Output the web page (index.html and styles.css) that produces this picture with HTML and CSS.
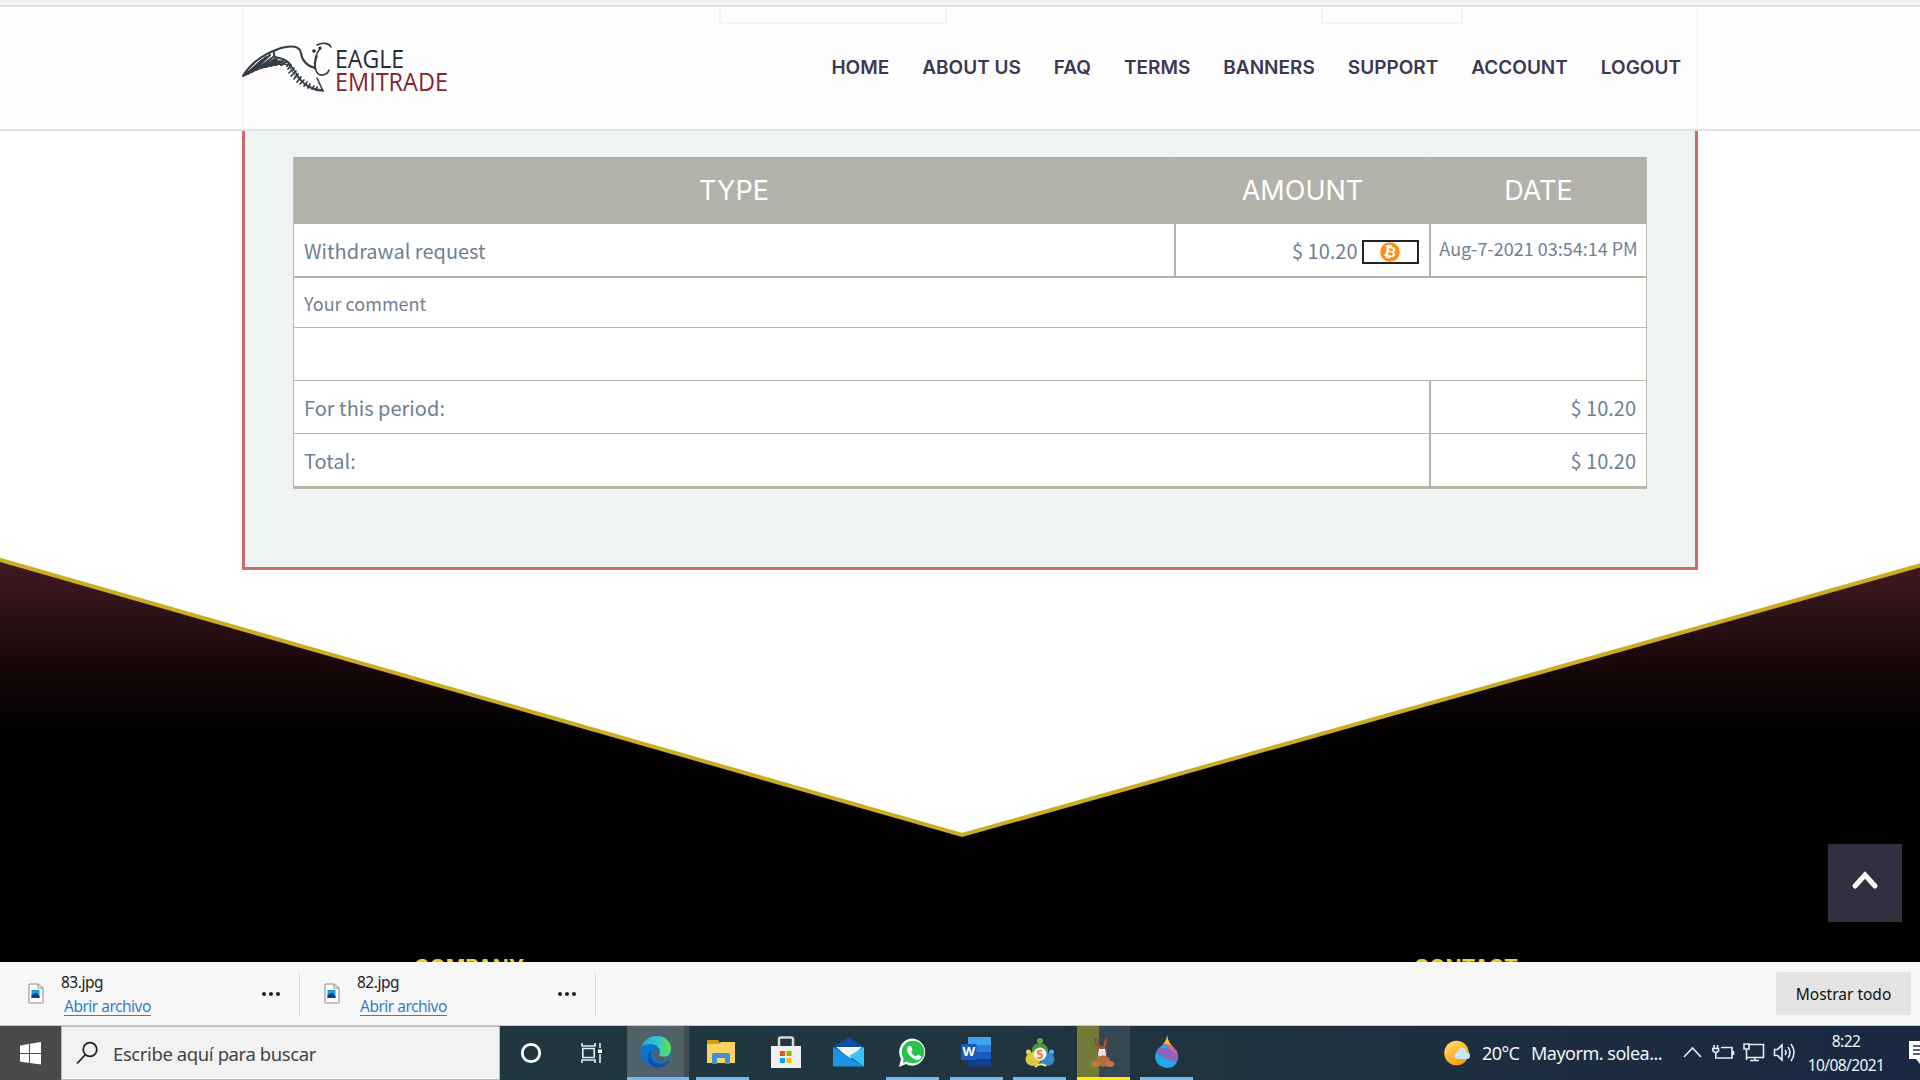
FILE: index.html
```html
<!DOCTYPE html>
<html lang="es">
<head>
<meta charset="utf-8">
<title>Eagle Emitrade</title>
<link rel="stylesheet" href="styles.css">
</head>
<body>
<div class="browser-edge"></div>
<main class="page">
  <header class="site-header">
    <div class="ghosts"><span class="ghost-a"></span><span class="ghost-b"></span></div>
    <svg class="logo" viewBox="242 40 208 54" width="208" height="54">
      <g fill="none" stroke="#343b43" stroke-linecap="round">
        <path d="M243 76C252 61 266 53 281 48C291 45 300 46 301 53C302 61 308 66 315 68" stroke-width="2"/>
        <path d="M315 69C314 60 315 54 320 49M317 45C322 42 329 43 331 47M317 56C313 67 316 76 323 75Q328 74 329 70M317 78L323 91Q308 90 300 79L289 63" stroke-width="1.6"/>
        <path d="M274 52Q273 58 279 58Q288 60 290 65" stroke-width="2"/>
        <path d="M244 76Q262 66 282 64L289 65Q293 76 305 84Q314 90 323 90" stroke-width="1"/>
        <path d="M245 75L262 60M248 74L266 57M252 72L270 55M256 70L273 57M261 68L275 59M266 67L277 60M271 66L280 61M276 65L283 61M281 65L286 62M287 66L289 63" stroke-width="2.1"/>
        <path d="M288 69L291 65M289 73L294 68M291 76L296 71M294 79L298 74M297 82L301 77M300 84L304 80M304 86L307 82M308 88L310 84M312 89L314 86M316 90L317 87" stroke-width="1.7"/>
      </g>
      <circle cx="314" cy="51" r="1.8" fill="#1d242b"/><circle cx="320" cy="48" r="1.6" fill="#1d242b"/>
      <text class="logo-text" x="335" y="67.500" textLength="69" lengthAdjust="spacingAndGlyphs" fill="#262c33">EAGLE</text>
      <text class="logo-text" x="335" y="91" textLength="113" lengthAdjust="spacingAndGlyphs" fill="#832432">EMITRADE</text>
    </svg>
    <nav class="nav"><a>HOME</a><a>ABOUT US</a><a>FAQ</a><a>TERMS</a><a>BANNERS</a><a>SUPPORT</a><a>ACCOUNT</a><a>LOGOUT</a></nav>
  </header>
  <section class="panel">
    <div class="grid">
      <div class="row head"><div class="type">TYPE</div><div class="amount">AMOUNT</div><div class="date">DATE</div></div>
      <div class="row request"><div class="type">Withdrawal request</div><div class="amount">$ 10.20 <svg class="coin" width="57" height="24" viewBox="0 0 57 24"><rect x="1" y="1" width="55" height="22" fill="#fff" stroke="#222" stroke-width="2"/><circle cx="28" cy="12" r="9.800" fill="#fb9113"/><text x="28" y="17" text-anchor="middle" transform="rotate(12 28 12)" class="coin-b">₿</text></svg></div><div class="date small">Aug-7-2021 03:54:14 PM</div></div>
      <div class="row comment"><div>Your comment</div></div>
      <div class="row blank"><div></div></div>
      <div class="row sum"><div class="label">For this period:</div><div class="date">$ 10.20</div></div>
      <div class="row sum last"><div class="label">Total:</div><div class="date">$ 10.20</div></div>
    </div>
  </section>
  <footer class="site-footer">
    <svg class="chevron" width="1920" height="408" viewBox="0 554 1920 408">
      <defs><linearGradient id="wine" gradientUnits="userSpaceOnUse" x1="0" y1="554" x2="0" y2="732"><stop offset="0" stop-color="#421a22"/><stop offset=".25" stop-color="#331419"/><stop offset=".62" stop-color="#180709"/><stop offset="1" stop-color="#020100"/></linearGradient></defs>
      <path d="M0 560L962 836L1920 565V962H0Z" fill="url(#wine)"/>
      <path d="M-5 558.500L962 835L1925 564" fill="none" stroke="#cbad22" stroke-width="4"/>
    </svg>
    <div class="columns"><span>COMPANY</span><span>CONTACT</span></div>
    <button class="to-top"><svg width="30" height="22" viewBox="0 0 30 22"><path d="M5 17L15 6L25 17" fill="none" stroke="#fff" stroke-width="5" stroke-linecap="round"/></svg></button>
  </footer>
</main>
<section class="downloads">
  <div class="download">
    <svg width="16" height="21" viewBox="0 0 16 21"><path d="M1 1H10L15 5V20H1Z" fill="#fff" stroke="#8a8a8a"/><path d="M10 1V5H15" fill="none" stroke="#8a8a8a"/><path d="M3.500 7H11.500V15H3.500Z" fill="#1795e3"/><path d="M3.500 12L8 10L11.500 13V15H3.500Z" fill="#153a80"/></svg>
    <div class="names"><span>83.jpg</span><a>Abrir archivo</a></div><i class="dots"></i>
  </div>
  <div class="download">
    <svg width="16" height="21" viewBox="0 0 16 21"><path d="M1 1H10L15 5V20H1Z" fill="#fff" stroke="#8a8a8a"/><path d="M10 1V5H15" fill="none" stroke="#8a8a8a"/><path d="M3.500 7H11.500V15H3.500Z" fill="#1795e3"/><path d="M3.500 12L8 10L11.500 13V15H3.500Z" fill="#153a80"/></svg>
    <div class="names"><span>82.jpg</span><a>Abrir archivo</a></div><i class="dots"></i>
  </div>
  <button class="show-all">Mostrar todo</button>
</section>
<section class="taskbar">
  <div class="start"><svg width="22" height="23" viewBox="0 0 22 23"><path d="M0 3.500L9 2V11H0ZM10 1.800L21 0V11H10ZM0 12H9V21L0 19.500ZM10 12H21V22.500L10 21Z" fill="#fff"/></svg></div>
  <div class="search"><svg width="23" height="24" viewBox="0 0 23 24"><circle cx="14" cy="8.500" r="6.800" fill="none" stroke="#222" stroke-width="1.800"/><path d="M9.500 13.500L1 22.500" stroke="#222" stroke-width="1.800"/></svg><span>Escribe aquí para buscar</span></div>
  <div class="tool cortana"><svg width="22" height="22" viewBox="0 0 22 22"><circle cx="11" cy="11" r="8.700" fill="none" stroke="#fff" stroke-width="2.800"/></svg></div>
  <div class="tool view"><svg width="22" height="22" viewBox="0 0 22 22" fill="none" stroke="#e8ecee" stroke-width="1.600"><path d="M1 1V4H14V1M1 21V18H14V21M1.800 6.500H13.200V15.500H1.800ZM19 1V6M19 12V21"/><path d="M17 7.500H21V11H17Z" fill="#fff" stroke="none"/></svg></div>
  <div class="app edge"><svg width="32" height="34" viewBox="0 0 32 34"><defs><linearGradient id="eg" x1="0" x2="1"><stop stop-color="#2aa5e0"/><stop offset=".55" stop-color="#31c6c9"/><stop offset="1" stop-color="#66df4e"/></linearGradient></defs><circle cx="16" cy="17" r="15.500" fill="#0c74cf"/><path d="M1 13C4 4 10 1 17 1C26 1 32 8 31 15C30 22 24 23 20 22C17 21 20 20 20 17C20 12 15 9 10 9C6 9 3 10 1 13Z" fill="url(#eg)"/><path d="M12 15C8 22 13 29 21 29C25 29 28 26 30 25C26 32 19 34 14 32C6 29 6 19 12 15Z" fill="#12509e"/><path d="M14 16Q16 13 19 14Q20 17 18.500 20Q21 23 30 21L29 25C22 30 12 25 14 16Z" fill="#4e6168"/></svg></div>
  <div class="app files"><svg width="30" height="26" viewBox="0 0 30 26"><path d="M1 1H12L14 4H26V9H1Z" fill="#e09a06"/><path d="M1 5H13L15 3H29V24H1Z" fill="#fbd365"/><path d="M6 25V16Q6 14 8 14H22Q24 14 24 16V25H19V19H11V25Z" fill="#3e90d8"/></svg></div>
  <div class="app"><svg width="30" height="33" viewBox="0 0 30 33"><path d="M8 10V3Q8 1.500 10 1.500H20Q22 1.500 22 3V10" fill="none" stroke="#d5d7da" stroke-width="2.500"/><path d="M0 10H30V32H0Z" fill="#f1f1f1"/><path d="M9 15H14V20H9Z" fill="#f04e23"/><path d="M15.500 15H20.500V20H15.500Z" fill="#7fba00"/><path d="M9 22H14V27H9Z" fill="#00a4ef"/><path d="M15.500 22H20.500V27H15.500Z" fill="#ffb900"/></svg></div>
  <div class="app"><svg width="32" height="30" viewBox="0 0 32 30"><path d="M0 10L16 0L31 10V15H0Z" fill="#0a4fa0"/><path d="M3 10H29L17 22Z" fill="#f4f4f4"/><path d="M0 10L31 29.500H0Z" fill="#1e93e6"/><path d="M31 10V29.500L16 19Z" fill="#38c4f5"/></svg></div>
  <div class="app run"><svg width="29" height="31" viewBox="0 0 29 31"><path d="M1 30L3 22A13 13.500 0 1 1 8 27Z" fill="#fff"/><circle cx="15" cy="15" r="11.300" fill="#28c24b"/><path d="M5 26L6 20L10 24Z" fill="#28c24b"/><path d="M10.500 9L13 9L14.500 13L13 15Q15 18.500 18 19.500L20 17.500L23.500 19.500Q22 24 17.500 22.500Q9.500 19.500 9 12Q9 10 10.500 9Z" fill="#fff"/></svg></div>
  <div class="app run multi"><svg width="32" height="30" viewBox="0 0 32 30"><path d="M8 0H31V8H8Z" fill="#41a5ee"/><path d="M8 8H31V15H8Z" fill="#2b7cd3"/><path d="M8 15H31V22H8Z" fill="#185abd"/><path d="M8 22H31V29.500H8Z" fill="#103f91"/><path d="M1 7H16.500V23H1Z" fill="#1b5bc0"/><text x="8.700" y="19" class="glyph-w" text-anchor="middle">W</text></svg></div>
  <div class="app run"><svg width="30" height="31" viewBox="0 0 30 31"><circle cx="15" cy="4" r="3" fill="#62a94b"/><path d="M7 16Q6 6 15 6Q24 7 23 16Z" fill="#4b9840"/><circle cx="3.500" cy="15" r="2.500" fill="#e2d968"/><circle cx="26.500" cy="15" r="2.500" fill="#59b2ea"/><ellipse cx="8" cy="22" rx="7.500" ry="7" fill="#d9c73e"/><ellipse cx="22" cy="22" rx="7.500" ry="7" fill="#3687c4"/><path d="M10 30Q15 25 21 29" stroke="#f4e97a" stroke-width="2" fill="none"/><circle cx="15" cy="17" r="6.500" fill="#f6f3ea"/><text x="15" y="21.500" text-anchor="middle" class="glyph-5">5</text></svg></div>
  <div class="app mule"><svg width="24" height="32" viewBox="0 0 24 32"><path d="M8 12Q3 6 4 2Q8 4 10 12M12 12Q12 4 16 0Q17 8 13 13" fill="#9d623c" stroke="#6b4029"/><path d="M6 11Q11 8 15 12L16 20H6Z" fill="#8d5638"/><ellipse cx="11" cy="18" rx="4" ry="5" fill="#e7e2dd"/><circle cx="9" cy="14" r="1.300" fill="#fff"/><circle cx="13" cy="14" r="1.300" fill="#fff"/><ellipse cx="12" cy="25" rx="7" ry="5.500" fill="#b06e3e"/><ellipse cx="4.500" cy="28" rx="4" ry="3" fill="#c27b43"/><ellipse cx="19" cy="28" rx="4" ry="3" fill="#c27b43"/><path d="M14 21L18 24L14 26Z" fill="#d95068"/></svg></div>
  <div class="app run"><svg width="26" height="34" viewBox="0 0 26 34"><defs><clipPath id="drop"><path d="M13 0Q14 8 20 13Q25 18 24 24Q22 33 13 33Q3 32 1 23Q1 16 7 11Q13 7 13 0Z"/></clipPath></defs><g clip-path="url(#drop)"><path d="M0 0H26V34H0Z" fill="#22a9ea"/><path d="M0 7Q8 17 26 13V27Q11 27 0 15Z" fill="#8f62bd"/><path d="M4 8Q13 9 17 15Q21 20 26 18V8L12 3Z" fill="#ec5b86"/><path d="M10 0H18L20 13Q14 8 9 9Z" fill="#fcc510"/></g></svg></div>
  <div class="tray">
    <svg width="27" height="27" viewBox="0 0 27 27"><defs><linearGradient id="sun" x1="0" y1="0" x2=".6" y2="1"><stop stop-color="#ffe268"/><stop offset="1" stop-color="#fb9b12"/></linearGradient></defs><circle cx="12.500" cy="13" r="12.300" fill="url(#sun)"/><path d="M13 19Q9 18 11 14Q12 12 14 12Q15 7 19 8Q22 8 22 12Q26 12 26 16Q26 19 23 19Z" fill="#c4e6fb"/></svg>
    <span class="temp">20°C</span><span class="sky">Mayorm. solea...</span>
    <svg class="status" width="114" height="26" viewBox="1683 1041 114 26" fill="none" stroke="#e8ebf0" stroke-width="1.600"><path d="M1684 1058L1692.500 1049L1701 1058"/><path d="M1721 1048.500H1732V1059H1717M1733.500 1052V1056M1714 1046V1049M1717.500 1046V1049M1712.800 1049.500H1718.500V1052L1715.800 1054L1713 1052ZM1715.800 1054V1060"/><path d="M1749 1045.500H1763.500V1058.500H1746M1755 1058.500V1062M1750 1061.500H1759M1744 1045H1749V1050H1744ZM1746.500 1050V1061"/><path d="M1774.500 1050.500H1777.500L1782 1046V1061L1777.500 1056.500H1774.500ZM1785 1051Q1787 1053.500 1785 1056M1788 1048Q1792 1053.500 1788 1059M1791 1045Q1797 1053.500 1791 1062"/></svg>
    <div class="clock"><span>8:22</span><span>10/08/2021</span></div>
    <svg class="note" width="11" height="24" viewBox="0 0 11 24"><path d="M0 0H11V23L7 18H0Z" fill="#fff"/><path d="M4 5H11M4 9H11M4 13H11" stroke="#25314a" stroke-width="1.500"/></svg>
  </div>
</section>
</body>
</html>
```
FILE: styles.css
```css
* { box-sizing: border-box; }
body { margin: 0; width: 1920px; height: 1080px; overflow: hidden; display: flex; flex-direction: column; background: #fff; font-family: "Noto Sans", sans-serif; }
svg { display: block; flex: none; }
button { border: 0; padding: 0; font: inherit; }

.browser-edge { height: 7px; flex: none; background: linear-gradient(#f0f0f0, #f8f8f8 5px, #d9d9d9 5px, #e8e8e8); }
.page { height: 955px; flex: none; display: flex; flex-direction: column; position: relative; overflow: hidden; }

.site-header { height: 124px; flex: none; position: relative; display: flex; justify-content: space-between; padding: 33px 239px 0 242px; background: #fefefe; border-bottom: 2px solid #dfe3e5; }
.ghosts { position: absolute; top: 0; left: 242px; width: 1456px; height: 122px; border: solid #fbf5f6; border-width: 0 2px; display: flex; padding-left: 475px; }
.ghosts span { height: 17px; border: 2px solid #f4f4f4; border-top: 0; }
.ghost-a { width: 228px; margin-right: 374px; }
.ghost-b { width: 142px; }
.logo { position: relative; }
.logo-text { font: 26px "Open Sans", sans-serif; stroke-width: .5; }
.nav { position: relative; display: flex; gap: 33px; padding-top: 12px; font: 600 19px/32px Inter, sans-serif; color: #3d3752; }

.panel { width: 1456px; height: 439px; flex: none; margin-left: 242px; padding: 26px 48px 0 48px; background: #eff3f2; border: 3px solid #d0696c; border-top: 0; }
.grid { width: 1354px; background: #fff; border: 1px solid #b7b7ab; border-top: 0; color: #6f7f92; font: 20px "Noto Sans CJK SC", sans-serif; }
.row { display: flex; border-bottom: 1px solid #b4b4a8; }
.row > div { display: flex; align-items: center; padding: 0 10px; white-space: pre; }
.row .type { width: 880px; }
.row .amount { width: 255px; justify-content: flex-end; border-left: 2px solid #b4b4a8; }
.row .date { width: 217px; justify-content: flex-end; border-left: 2px solid #b4b4a8; }
.row .label { width: 1135px; }
.row.head { height: 67px; background: #b2b2a8; color: #fff; font: 27px Inter, sans-serif; }
.row.head > div { justify-content: center; }
.request { height: 54px; border-bottom-width: 2px; }
.request .coin { margin-top: 4px; }
.coin-b { font: bold 15px "DejaVu Sans", sans-serif; fill: #fff; }
.row .small { justify-content: center; font-size: 18px; padding-bottom: 4px; }
.comment { height: 50px; font-size: 18px; }
.blank { height: 53px; }
.sum { height: 53px; }
.sum.last { height: 54px; border-bottom-width: 2px; }

.site-footer { position: absolute; left: 0; bottom: 0; width: 1920px; height: 408px; z-index: -1; }
.columns { position: absolute; left: 414px; bottom: 0; width: 1104px; height: 3px; overflow: hidden; display: flex; justify-content: space-between; font: bold 21px/21px Inter, sans-serif; color: #e5d72b; }
.columns span { margin-top: -2px; }
.to-top { position: absolute; left: 1828px; top: 290px; width: 74px; height: 78px; background: #332f40; display: flex; justify-content: center; padding-top: 25px; }

.downloads { height: 64px; flex: none; display: flex; align-items: center; background: #f7f7f7; border-bottom: 1px solid #c5ccd0; }
.download { width: 296px; height: 42px; display: flex; align-items: center; border-right: 1px solid #d5d5d5; padding: 0 19px 0 24px; }
.download:first-child { width: 300px; padding-left: 28px; }
.names { display: flex; flex-direction: column; margin-left: 17px; flex: 1; font: 15.5px/24px "Noto Sans", sans-serif; color: #222; letter-spacing: -.5px; }
.names a { margin-left: 3px; color: #2f7fcc; text-decoration: underline; text-underline-offset: 3px; }
.dots { width: 4px; height: 4px; border-radius: 50%; background: #222; box-shadow: -7px 0 #222, -14px 0 #222; }
.show-all { margin-left: auto; margin-right: 9px; width: 135px; height: 43px; border-radius: 2px; background: #e4e4e4; font-size: 15.500px; color: #111; }

.taskbar { height: 54px; flex: none; display: flex; background: linear-gradient(90deg, #21373f 500px, #20343f 1200px, #1d2c40 1560px, #1b2743); color: #f2f4f6; }
.start { width: 61px; background: #4a4a4a; padding: 16px 20px; }
.search { width: 439px; background: #f2f2f2; border: 1px solid #b5b8b9; display: flex; align-items: center; padding-left: 14px; gap: 14px; color: #444; font-size: 18.500px; letter-spacing: -.4px; }
.tool { display: flex; align-items: center; }
.cortana { padding-left: 20px; width: 81px; }
.view { width: 46px; }
.app { width: 53px; margin-right: 10.500px; display: flex; align-items: center; justify-content: center; border-bottom: 3px solid transparent; }
.app svg { margin-top: 1px; }
.edge { width: 62px; margin-right: 7px; padding-right: 5px; background: linear-gradient(90deg, #4f6269 57px, #424c51 57px); border-color: #76b9ed; }
.files { margin-right: 10px; border-color: #76b9ed; padding-right: 3px; }
.run { border-color: #76b9ed; }
.mule { background: linear-gradient(90deg, #727b38 22px, #374653 22px); border-color: #fff000; }
.glyph-w { font: bold 13px "Open Sans", sans-serif; fill: #fff; }
.glyph-5 { font: bold 12px "Open Sans", sans-serif; fill: #e27b2c; }
.tray { margin-left: auto; display: flex; align-items: center; width: 476px; font-size: 18px; white-space: nowrap; }
.temp { width: 49px; margin-left: 11px; letter-spacing: -.6px; }
.sky { width: 152px; letter-spacing: -.5px; }
.clock { width: 98px; display: flex; flex-direction: column; align-items: center; font: 15.500px/24px "Noto Sans", sans-serif; letter-spacing: -.6px; }
.note { margin-left: 14px; }
```
